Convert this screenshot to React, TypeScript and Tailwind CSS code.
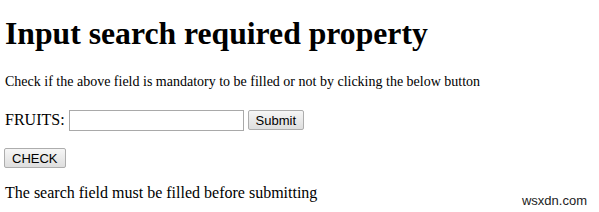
export default function App() {
  return (
    <div className="relative w-[599px] h-[212px] bg-white text-black overflow-hidden font-['Liberation_Serif',serif]">
      <div className="pl-[5px]">
        <h1 className="pt-[18px] text-[31.7px] leading-[32px] font-bold">Input search required property</h1>
        <p className="mt-[24px] text-[14px] leading-[16px]">
          Check if the above field is mandatory to be filled or not by clicking the below button
        </p>
        <form className="mt-[18px] flex items-center text-[16px]" onSubmit={(e) => e.preventDefault()}>
          <label htmlFor="fruits" className="mr-[4px]">FRUITS:</label>
          <input
            id="fruits"
            type="search"
            required
            className="w-[175px] h-[21px] border border-[#a9a9a9] bg-white"
          />
          <button
            type="submit"
            className="ml-[4px] h-[20px] px-[7px] border border-[#adadad] rounded-[2px] bg-gradient-to-b from-[#f6f6f6] to-[#dedede] text-[13px] font-['Liberation_Sans',sans-serif]"
          >
            Submit
          </button>
        </form>
        <button
          type="button"
          className="mt-[16px] -ml-[1px] h-[20px] px-[7px] border border-[#adadad] rounded-[2px] bg-gradient-to-b from-[#f6f6f6] to-[#dedede] text-[13px] font-['Liberation_Sans',sans-serif]"
        >
          CHECK
        </button>
        <p className="mt-[14px] text-[16px] leading-[18px]">The search field must be filled before submitting</p>
      </div>
      <span className="absolute right-[12px] bottom-[5px] text-[13px] leading-[13px] text-[#222] font-['Liberation_Sans',sans-serif]">
        wsxdn.com
      </span>
    </div>
  );
}
